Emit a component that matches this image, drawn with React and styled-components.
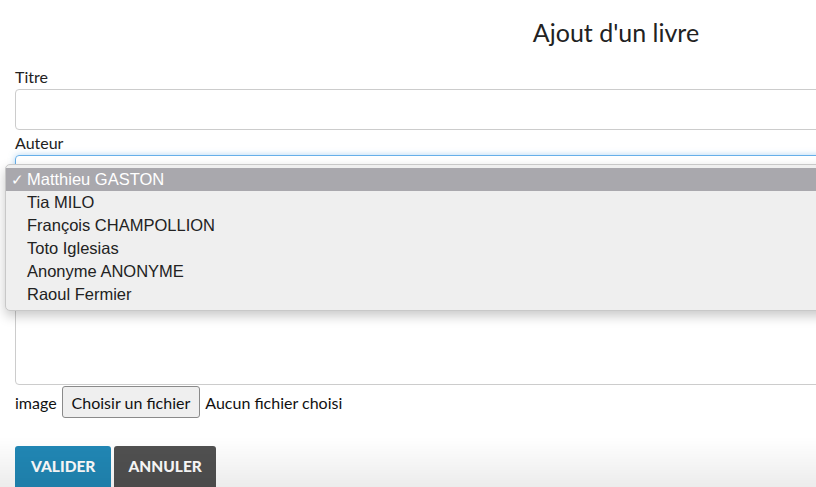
import styled, {createGlobalStyle} from "styled-components";

const GlobalStyle = createGlobalStyle`
  html, body {
    margin: 0;
    padding: 0;
    overflow: hidden;
    background: #fff;
  }
  body {
    font-family: Lato, "Open Sans", sans-serif;
    color: #333;
  }
`;

const Page = styled.div`
  width: 1202px;
  padding: 0 15px;
  position: relative;
`;
const Title = styled.h2`
  margin: 0;
  padding-top: 17px;
  height: 48px;
  text-align: center;
  font-size: 25px;
  font-weight: 400;
  color: #222;
`;
const Form = styled.form`
  display: flex;
  flex-direction: column;
  margin-top: 2px;
`;
const Label = styled.label`
  display: block;
  font-size: 16px;
  line-height: 20px;
  margin-bottom: 2px;
  color: #222;
`;
const Field = styled.div`
  display: flex;
  flex-direction: column;
  position: relative;
`;
const Input = styled.input`
  box-sizing: border-box;
  height: 41px;
  width: 100%;
  border: 1px solid #ccc;
  border-radius: 4px;
  margin-bottom: 3px;
`;
const SelectBox = styled.div`
  box-sizing: border-box;
  height: 41px;
  width: 100%;
  border: 1px solid #66afe9;
  border-radius: 4px;
  box-shadow: 0 0 6px rgba(102, 175, 233, 0.5);
  margin-bottom: 7px;
`;
// description field: its label sits under the open author list
const TextArea = styled.textarea`
  box-sizing: border-box;
  height: 160px;
  width: 100%;
  margin-top: 22px;
  border: 1px solid #ccc;
  border-radius: 4px;
  resize: none;
  display: block;
`;
const FileRow = styled.div`
  display: flex;
  align-items: center;
  gap: 5px;
  font-size: 16px;
  padding-top: 1px;
  height: 32px;
  color: #111;
`;
const FileButton = styled.button`
  font-family: Lato, sans-serif;
  font-size: 16px;
  height: 32px;
  padding: 0 9px;
  background: #efefef;
  border: 1px solid #8a8a8a;
  border-radius: 3px;
  color: #111;
`;
const Actions = styled.div`
  display: flex;
  gap: 3px;
  margin-top: 28px;
`;
const Button = styled.button`
  font-family: Lato, sans-serif;
  font-size: 15.5px;
  font-weight: 900;
  color: #fff;
  border: none;
  border-radius: 3px 3px 0 0;
  height: 44px;
  padding: 0 ${p => p.pad}px 4px;
  background: ${p => p.bg};
`;
const Dropdown = styled.ul`
  position: absolute;
  left: -10px;
  top: 31px;
  width: 1220px;
  margin: 0;
  padding: 3px 0 4px;
  list-style: none;
  background: #efefef;
  border: 1px solid #c8c8c8;
  border-radius: 5px;
  box-shadow: 0 5px 12px rgba(0, 0, 0, 0.22);
  font-family: "Liberation Sans", Arial, sans-serif;
  font-size: 16.5px;
  color: #222;
  z-index: 5;
`;
const Option = styled.li`
  height: 23px;
  line-height: 23px;
  padding-left: 21px;
  position: relative;
  background: ${p => p.selected ? '#a9a8ad' : 'transparent'};
  color: ${p => p.selected ? '#fff' : '#222'};
`;
const Check = styled.span`
  position: absolute;
  left: 5px;
  font-size: 15px;
`;
const Fade = styled.div`
  position: fixed;
  left: 0;
  right: 0;
  bottom: 0;
  height: 50px;
  background: linear-gradient(rgba(0,0,0,0), rgba(0,0,0,0.075));
  pointer-events: none;
`;

const authors = ['Matthieu GASTON', 'Tia MILO', 'François CHAMPOLLION', 'Toto Iglesias', 'Anonyme ANONYME', 'Raoul Fermier'];

export default function App() {
  return (
    <>
      <GlobalStyle/>
      <Page>
        <Title>Ajout d'un livre</Title>
        <Form>
          <Field>
            <Label>Titre</Label>
            <Input type="text"/>
          </Field>
          <Field>
            <Label>Auteur</Label>
            <SelectBox/>
            <Dropdown>
              {authors.map((a, i) =>
                <Option key={a} selected={i === 0}>
                  {i === 0 && <Check>✓</Check>}
                  {a}
                </Option>
              )}
            </Dropdown>
          </Field>
          <Field>
            <TextArea/>
          </Field>
          <FileRow>
            <span>image</span>
            <FileButton type="button">Choisir un fichier</FileButton>
            <span>Aucun fichier choisi</span>
          </FileRow>
          <Actions>
            <Button type="button" bg="#2188b6" pad={16}>VALIDER</Button>
            <Button type="button" bg="#515151" pad={14}>ANNULER</Button>
          </Actions>
        </Form>
      </Page>
      <Fade/>
    </>
  )
}
